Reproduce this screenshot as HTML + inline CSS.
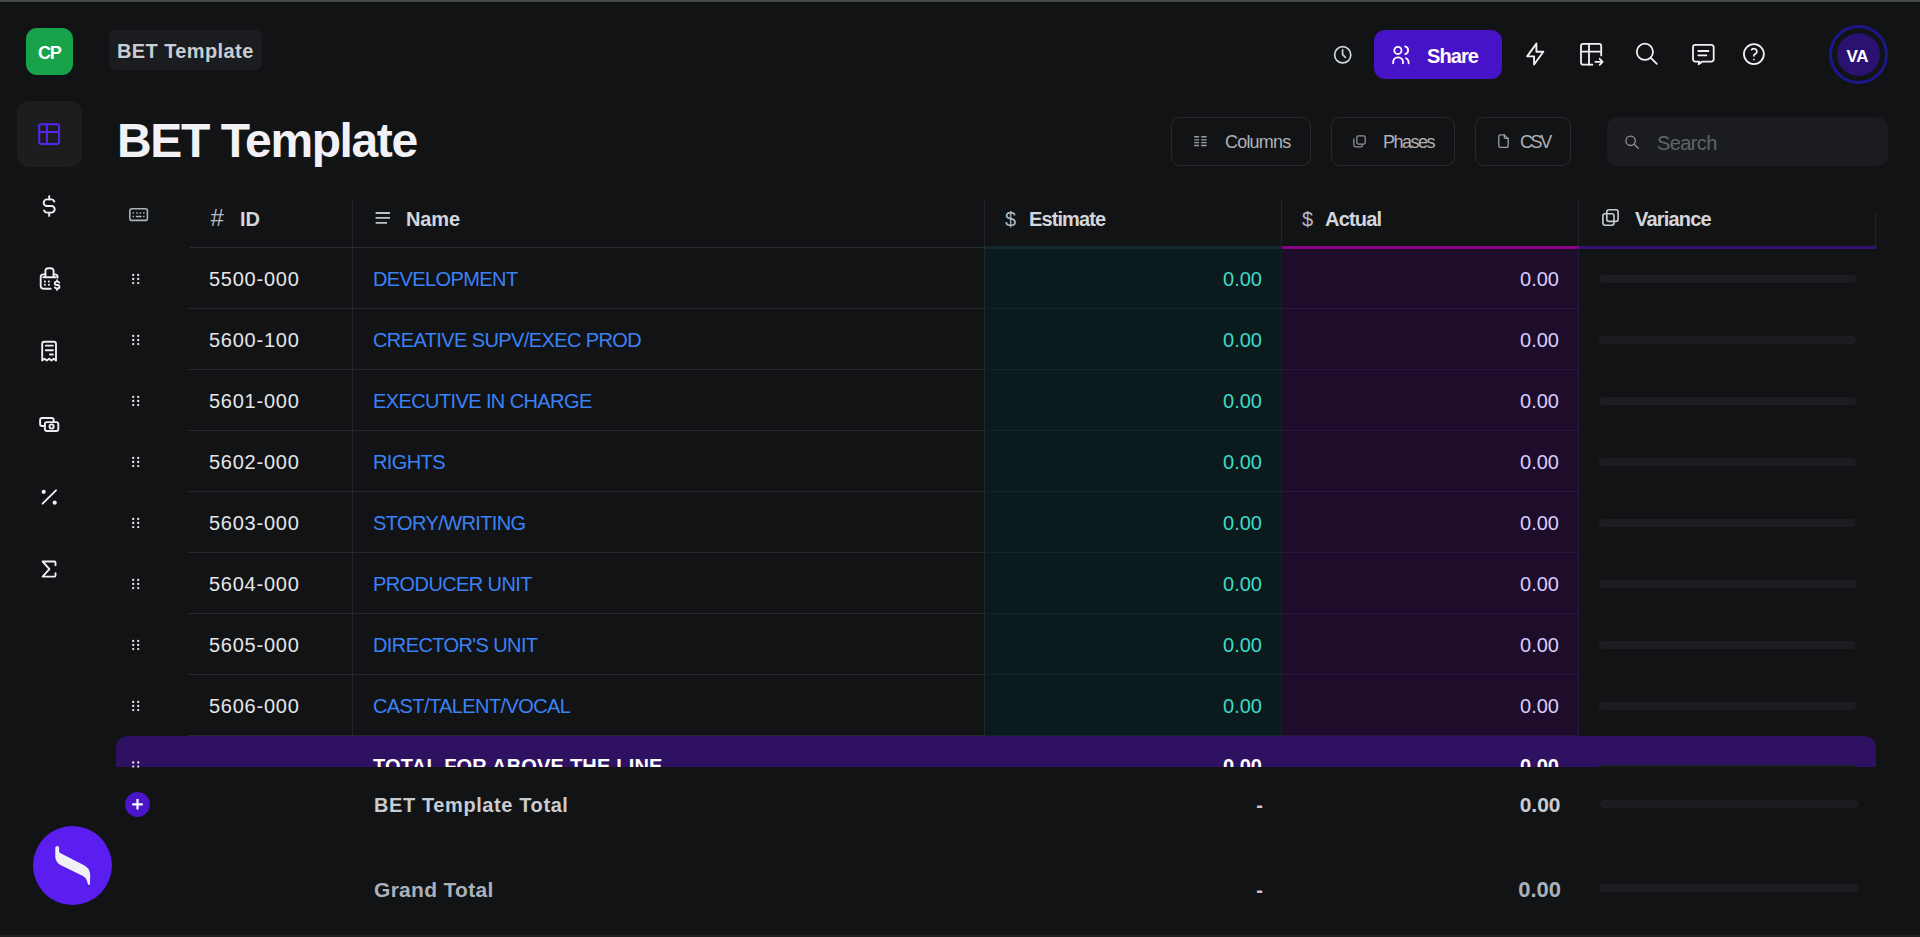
<!DOCTYPE html>
<html><head><meta charset="utf-8">
<style>
*{box-sizing:border-box;margin:0;padding:0}
html,body{width:1920px;height:937px;overflow:hidden;background:#121315;font-family:"Liberation Sans",sans-serif}
.a{position:absolute}
.t{position:absolute;line-height:1;white-space:nowrap}
svg.ov{position:absolute;left:0;top:0;width:1920px;height:937px;overflow:visible}
</style></head><body>
<div class="a" style="left:0;top:0;width:1920px;height:2px;background:#45494a"></div>
<div class="a" style="left:0;top:2px;width:1920px;height:1px;background:#0e0f11"></div>
<div class="a" style="left:26px;top:28px;width:47px;height:47px;border-radius:11px;background:#18a34a"></div>
<div class="t" style="left:38px;top:43.66px;font-size:18px;font-weight:700;color:#ffffff;letter-spacing:-1.2px;">CP</div>
<div class="a" style="left:109px;top:30px;width:153px;height:40px;border-radius:6px;background:#1b1c1f"></div>
<div class="t" style="left:117px;top:41.27px;font-size:20px;font-weight:700;color:#c9cdd4;letter-spacing:0.4px;">BET Template</div>
<div class="t" style="left:117px;top:117.17px;font-size:48px;font-weight:700;color:#f1f1f6;letter-spacing:-1.4px;">BET Template</div>
<div class="a" style="left:17px;top:101px;width:65px;height:66px;border-radius:12px;background:#1c1d1f"></div>
<div class="a" style="left:1374px;top:30px;width:128px;height:49px;border-radius:11px;background:#4713c7"></div>
<div class="t" style="left:1427px;top:46.27px;font-size:20px;font-weight:700;color:#ffffff;letter-spacing:-0.9px;">Share</div>
<div class="a" style="left:1829px;top:25px;width:59px;height:59px;border-radius:50%;border:3px solid #1c178c"></div>
<div class="a" style="left:1837px;top:33px;width:43px;height:43px;border-radius:50%;background:#2b1270"></div>
<div class="t" style="left:1846.5px;top:47.91px;font-size:17px;font-weight:700;color:#ffffff;letter-spacing:-0.4px;">VA</div>
<div class="a" style="left:1171px;top:117px;width:140px;height:49px;border-radius:9px;border:1px solid #26282b"></div>
<div class="t" style="left:1225px;top:133.46px;font-size:18px;font-weight:400;color:#aeb2b9;letter-spacing:-0.8px;">Columns</div>
<div class="a" style="left:1331px;top:117px;width:124px;height:49px;border-radius:9px;border:1px solid #26282b"></div>
<div class="t" style="left:1383px;top:133.46px;font-size:18px;font-weight:400;color:#aeb2b9;letter-spacing:-1.5px;">Phases</div>
<div class="a" style="left:1475px;top:117px;width:96px;height:49px;border-radius:9px;border:1px solid #26282b"></div>
<div class="t" style="left:1520px;top:133.46px;font-size:18px;font-weight:400;color:#aeb2b9;letter-spacing:-2.4px;">CSV</div>
<div class="a" style="left:1607px;top:117px;width:281px;height:49px;border-radius:10px;background:#1b1c1f"></div>
<div class="t" style="left:1657px;top:133.37px;font-size:20px;font-weight:400;color:#5f646b;letter-spacing:-0.6px;">Search</div>
<div class="t" style="left:210.5px;top:205.68px;font-size:24px;font-weight:400;color:#b4bac2;">#</div>
<div class="t" style="left:240px;top:208.57px;font-size:20px;font-weight:700;color:#d3d6dc;">ID</div>
<div class="t" style="left:406px;top:208.57px;font-size:20px;font-weight:700;color:#d3d6dc;letter-spacing:-0.1px;">Name</div>
<div class="t" style="left:1005px;top:208.57px;font-size:20px;font-weight:400;color:#b4bac2;">$</div>
<div class="t" style="left:1029px;top:208.57px;font-size:20px;font-weight:700;color:#d3d6dc;letter-spacing:-0.9px;">Estimate</div>
<div class="t" style="left:1302px;top:208.57px;font-size:20px;font-weight:400;color:#b4bac2;">$</div>
<div class="t" style="left:1325px;top:208.57px;font-size:20px;font-weight:700;color:#d3d6dc;letter-spacing:-0.8px;">Actual</div>
<div class="t" style="left:1635px;top:208.57px;font-size:20px;font-weight:700;color:#d3d6dc;letter-spacing:-0.8px;">Variance</div>
<div class="a" style="left:352px;top:199px;width:1px;height:48px;background:#232427"></div>
<div class="a" style="left:984px;top:199px;width:1px;height:48px;background:#232427"></div>
<div class="a" style="left:1281px;top:199px;width:1px;height:48px;background:#232427"></div>
<div class="a" style="left:1578px;top:199px;width:1px;height:48px;background:#232427"></div>
<div class="a" style="left:1875px;top:211px;width:1px;height:38px;background:#232427"></div>
<div class="a" style="left:190px;top:247px;width:795px;height:1px;background:#2a2c30"></div>
<div class="a" style="left:985px;top:246px;width:296px;height:490px;background:#0b1b1d"></div>
<div class="a" style="left:1282px;top:246px;width:296px;height:490px;background:#1d0d2a"></div>
<div class="a" style="left:985px;top:246px;width:296px;height:3px;background:#13292e"></div>
<div class="a" style="left:1282px;top:246px;width:297px;height:3px;background:#8c0088"></div>
<div class="a" style="left:1579px;top:246px;width:297px;height:3px;background:#341274"></div>
<div class="a" style="left:188px;top:308px;width:797px;height:1px;background:#26282b"></div>
<div class="a" style="left:985px;top:308px;width:296px;height:1px;background:#10262a"></div>
<div class="a" style="left:1282px;top:308px;width:296px;height:1px;background:#2a1640"></div>
<div class="a" style="left:352px;top:248px;width:1px;height:61px;background:#232427"></div>
<div class="a" style="left:984px;top:248px;width:1px;height:61px;background:#232427"></div>
<div class="a" style="left:1281px;top:248px;width:1px;height:61px;background:#10262a"></div>
<div class="a" style="left:1578px;top:248px;width:1px;height:61px;background:#1f1a40"></div>
<div class="t" style="left:209px;top:269.07px;font-size:20px;font-weight:400;color:#e4e6ea;letter-spacing:0.75px;">5500-000</div>
<div class="t" style="left:373px;top:269.07px;font-size:20px;font-weight:400;color:#3b82f6;letter-spacing:-0.6px;">DEVELOPMENT</div>
<div class="t" style="right:658px;top:269.07px;font-size:20px;font-weight:400;color:#3ddac6;">0.00</div>
<div class="t" style="right:361px;top:269.07px;font-size:20px;font-weight:400;color:#d9ccff;">0.00</div>
<div class="a" style="left:1599px;top:275px;width:257px;height:8px;border-radius:4px;background:#1c1d20"></div>
<div class="a" style="left:188px;top:369px;width:797px;height:1px;background:#26282b"></div>
<div class="a" style="left:985px;top:369px;width:296px;height:1px;background:#10262a"></div>
<div class="a" style="left:1282px;top:369px;width:296px;height:1px;background:#2a1640"></div>
<div class="a" style="left:352px;top:309px;width:1px;height:61px;background:#232427"></div>
<div class="a" style="left:984px;top:309px;width:1px;height:61px;background:#232427"></div>
<div class="a" style="left:1281px;top:309px;width:1px;height:61px;background:#10262a"></div>
<div class="a" style="left:1578px;top:309px;width:1px;height:61px;background:#1f1a40"></div>
<div class="t" style="left:209px;top:330.07px;font-size:20px;font-weight:400;color:#e4e6ea;letter-spacing:0.75px;">5600-100</div>
<div class="t" style="left:373px;top:330.07px;font-size:20px;font-weight:400;color:#3b82f6;letter-spacing:-0.6px;">CREATIVE SUPV/EXEC PROD</div>
<div class="t" style="right:658px;top:330.07px;font-size:20px;font-weight:400;color:#3ddac6;">0.00</div>
<div class="t" style="right:361px;top:330.07px;font-size:20px;font-weight:400;color:#d9ccff;">0.00</div>
<div class="a" style="left:1599px;top:336px;width:257px;height:8px;border-radius:4px;background:#1c1d20"></div>
<div class="a" style="left:188px;top:430px;width:797px;height:1px;background:#26282b"></div>
<div class="a" style="left:985px;top:430px;width:296px;height:1px;background:#10262a"></div>
<div class="a" style="left:1282px;top:430px;width:296px;height:1px;background:#2a1640"></div>
<div class="a" style="left:352px;top:370px;width:1px;height:61px;background:#232427"></div>
<div class="a" style="left:984px;top:370px;width:1px;height:61px;background:#232427"></div>
<div class="a" style="left:1281px;top:370px;width:1px;height:61px;background:#10262a"></div>
<div class="a" style="left:1578px;top:370px;width:1px;height:61px;background:#1f1a40"></div>
<div class="t" style="left:209px;top:391.07px;font-size:20px;font-weight:400;color:#e4e6ea;letter-spacing:0.75px;">5601-000</div>
<div class="t" style="left:373px;top:391.07px;font-size:20px;font-weight:400;color:#3b82f6;letter-spacing:-0.6px;">EXECUTIVE IN CHARGE</div>
<div class="t" style="right:658px;top:391.07px;font-size:20px;font-weight:400;color:#3ddac6;">0.00</div>
<div class="t" style="right:361px;top:391.07px;font-size:20px;font-weight:400;color:#d9ccff;">0.00</div>
<div class="a" style="left:1599px;top:397px;width:257px;height:8px;border-radius:4px;background:#1c1d20"></div>
<div class="a" style="left:188px;top:491px;width:797px;height:1px;background:#26282b"></div>
<div class="a" style="left:985px;top:491px;width:296px;height:1px;background:#10262a"></div>
<div class="a" style="left:1282px;top:491px;width:296px;height:1px;background:#2a1640"></div>
<div class="a" style="left:352px;top:431px;width:1px;height:61px;background:#232427"></div>
<div class="a" style="left:984px;top:431px;width:1px;height:61px;background:#232427"></div>
<div class="a" style="left:1281px;top:431px;width:1px;height:61px;background:#10262a"></div>
<div class="a" style="left:1578px;top:431px;width:1px;height:61px;background:#1f1a40"></div>
<div class="t" style="left:209px;top:452.07px;font-size:20px;font-weight:400;color:#e4e6ea;letter-spacing:0.75px;">5602-000</div>
<div class="t" style="left:373px;top:452.07px;font-size:20px;font-weight:400;color:#3b82f6;letter-spacing:-0.6px;">RIGHTS</div>
<div class="t" style="right:658px;top:452.07px;font-size:20px;font-weight:400;color:#3ddac6;">0.00</div>
<div class="t" style="right:361px;top:452.07px;font-size:20px;font-weight:400;color:#d9ccff;">0.00</div>
<div class="a" style="left:1599px;top:458px;width:257px;height:8px;border-radius:4px;background:#1c1d20"></div>
<div class="a" style="left:188px;top:552px;width:797px;height:1px;background:#26282b"></div>
<div class="a" style="left:985px;top:552px;width:296px;height:1px;background:#10262a"></div>
<div class="a" style="left:1282px;top:552px;width:296px;height:1px;background:#2a1640"></div>
<div class="a" style="left:352px;top:492px;width:1px;height:61px;background:#232427"></div>
<div class="a" style="left:984px;top:492px;width:1px;height:61px;background:#232427"></div>
<div class="a" style="left:1281px;top:492px;width:1px;height:61px;background:#10262a"></div>
<div class="a" style="left:1578px;top:492px;width:1px;height:61px;background:#1f1a40"></div>
<div class="t" style="left:209px;top:513.07px;font-size:20px;font-weight:400;color:#e4e6ea;letter-spacing:0.75px;">5603-000</div>
<div class="t" style="left:373px;top:513.07px;font-size:20px;font-weight:400;color:#3b82f6;letter-spacing:-0.6px;">STORY/WRITING</div>
<div class="t" style="right:658px;top:513.07px;font-size:20px;font-weight:400;color:#3ddac6;">0.00</div>
<div class="t" style="right:361px;top:513.07px;font-size:20px;font-weight:400;color:#d9ccff;">0.00</div>
<div class="a" style="left:1599px;top:519px;width:257px;height:8px;border-radius:4px;background:#1c1d20"></div>
<div class="a" style="left:188px;top:613px;width:797px;height:1px;background:#26282b"></div>
<div class="a" style="left:985px;top:613px;width:296px;height:1px;background:#10262a"></div>
<div class="a" style="left:1282px;top:613px;width:296px;height:1px;background:#2a1640"></div>
<div class="a" style="left:352px;top:553px;width:1px;height:61px;background:#232427"></div>
<div class="a" style="left:984px;top:553px;width:1px;height:61px;background:#232427"></div>
<div class="a" style="left:1281px;top:553px;width:1px;height:61px;background:#10262a"></div>
<div class="a" style="left:1578px;top:553px;width:1px;height:61px;background:#1f1a40"></div>
<div class="t" style="left:209px;top:574.07px;font-size:20px;font-weight:400;color:#e4e6ea;letter-spacing:0.75px;">5604-000</div>
<div class="t" style="left:373px;top:574.07px;font-size:20px;font-weight:400;color:#3b82f6;letter-spacing:-0.6px;">PRODUCER UNIT</div>
<div class="t" style="right:658px;top:574.07px;font-size:20px;font-weight:400;color:#3ddac6;">0.00</div>
<div class="t" style="right:361px;top:574.07px;font-size:20px;font-weight:400;color:#d9ccff;">0.00</div>
<div class="a" style="left:1599px;top:580px;width:257px;height:8px;border-radius:4px;background:#1c1d20"></div>
<div class="a" style="left:188px;top:674px;width:797px;height:1px;background:#26282b"></div>
<div class="a" style="left:985px;top:674px;width:296px;height:1px;background:#10262a"></div>
<div class="a" style="left:1282px;top:674px;width:296px;height:1px;background:#2a1640"></div>
<div class="a" style="left:352px;top:614px;width:1px;height:61px;background:#232427"></div>
<div class="a" style="left:984px;top:614px;width:1px;height:61px;background:#232427"></div>
<div class="a" style="left:1281px;top:614px;width:1px;height:61px;background:#10262a"></div>
<div class="a" style="left:1578px;top:614px;width:1px;height:61px;background:#1f1a40"></div>
<div class="t" style="left:209px;top:635.07px;font-size:20px;font-weight:400;color:#e4e6ea;letter-spacing:0.75px;">5605-000</div>
<div class="t" style="left:373px;top:635.07px;font-size:20px;font-weight:400;color:#3b82f6;letter-spacing:-0.6px;">DIRECTOR'S UNIT</div>
<div class="t" style="right:658px;top:635.07px;font-size:20px;font-weight:400;color:#3ddac6;">0.00</div>
<div class="t" style="right:361px;top:635.07px;font-size:20px;font-weight:400;color:#d9ccff;">0.00</div>
<div class="a" style="left:1599px;top:641px;width:257px;height:8px;border-radius:4px;background:#1c1d20"></div>
<div class="a" style="left:188px;top:735px;width:797px;height:1px;background:#26282b"></div>
<div class="a" style="left:985px;top:735px;width:296px;height:1px;background:#10262a"></div>
<div class="a" style="left:1282px;top:735px;width:296px;height:1px;background:#2a1640"></div>
<div class="a" style="left:352px;top:675px;width:1px;height:61px;background:#232427"></div>
<div class="a" style="left:984px;top:675px;width:1px;height:61px;background:#232427"></div>
<div class="a" style="left:1281px;top:675px;width:1px;height:61px;background:#10262a"></div>
<div class="a" style="left:1578px;top:675px;width:1px;height:61px;background:#1f1a40"></div>
<div class="t" style="left:209px;top:696.07px;font-size:20px;font-weight:400;color:#e4e6ea;letter-spacing:0.75px;">5606-000</div>
<div class="t" style="left:373px;top:696.07px;font-size:20px;font-weight:400;color:#3b82f6;letter-spacing:-0.6px;">CAST/TALENT/VOCAL</div>
<div class="t" style="right:658px;top:696.07px;font-size:20px;font-weight:400;color:#3ddac6;">0.00</div>
<div class="t" style="right:361px;top:696.07px;font-size:20px;font-weight:400;color:#d9ccff;">0.00</div>
<div class="a" style="left:1599px;top:702px;width:257px;height:8px;border-radius:4px;background:#1c1d20"></div>
<div class="a" style="left:116px;top:736px;width:1760px;height:31px;overflow:hidden"><div class="a" style="left:0;top:0;width:1760px;height:61px;border-radius:12px;background:#2f1162"></div><div class="t" style="left:257px;top:20.27px;font-size:20px;font-weight:700;color:#ffffff;letter-spacing:0.2px;">TOTAL FOR ABOVE THE LINE</div>
<div class="t" style="right:614px;top:20.27px;font-size:20px;font-weight:700;color:#ffffff;">0.00</div>
<div class="t" style="right:317px;top:20.27px;font-size:20px;font-weight:700;color:#ffffff;">0.00</div>
<div class="a" style="left:1483px;top:29px;width:257px;height:8px;border-radius:4px;background:#1c1d20"></div></div>
<div class="a" style="left:125px;top:792px;width:25px;height:25px;border-radius:50%;background:#4a14c8"></div>
<div class="t" style="left:374px;top:794.87px;font-size:20px;font-weight:700;color:#c9ccd1;letter-spacing:0.6px;">BET Template Total</div>
<div class="t" style="right:657px;top:794.87px;font-size:20px;font-weight:700;color:#c9ccd1;">-</div>
<div class="t" style="right:359.5px;top:794.42px;font-size:21px;font-weight:700;color:#c9ccd1;">0.00</div>
<div class="a" style="left:1600px;top:800px;width:258px;height:8px;border-radius:4px;background:#1c1d20"></div>
<div class="t" style="left:374px;top:879.02px;font-size:21px;font-weight:700;color:#a9b1bb;letter-spacing:0.3px;">Grand Total</div>
<div class="t" style="right:657px;top:879.87px;font-size:20px;font-weight:700;color:#c9ccd1;">-</div>
<div class="t" style="right:359px;top:879.18px;font-size:22px;font-weight:700;color:#a9b1bb;">0.00</div>
<div class="a" style="left:1600px;top:884px;width:258px;height:8px;border-radius:4px;background:#1c1d20"></div>
<div class="a" style="left:33px;top:826px;width:79px;height:79px;border-radius:50%;background:#5a1ff0"></div>
<div class="a" style="left:0;top:935px;width:1920px;height:2px;background:#202222"></div>
<svg class="ov" viewBox="0 0 1920 937" fill="none" stroke-linecap="round" stroke-linejoin="round">
<g transform="translate(35.9,120.9) scale(1.1)" stroke="#5626ee" stroke-width="1.85"><path d="M3 5a2 2 0 0 1 2 -2h14a2 2 0 0 1 2 2v14a2 2 0 0 1 -2 2h-14a2 2 0 0 1 -2 -2z"/><path d="M3 10h18"/><path d="M10 3v18"/></g>
<g transform="translate(36,192.8) scale(1.1)" stroke="#eceef2" stroke-width="1.75"><path d="M16.7 8a3 3 0 0 0 -2.7 -2h-4a3 3 0 0 0 0 6h4a3 3 0 0 1 0 6h-4a3 3 0 0 1 -2.7 -2"/><path d="M12 3v3m0 12v3"/></g>
<g stroke="#eceef2" stroke-width="1.9"><path d="M45.4 277V270.8a2.6 2.6 0 0 1 2.6 -2.6H51a2.6 2.6 0 0 1 2.6 2.6V277"/><path d="M50.6 288.7H43.3a2.6 2.6 0 0 1 -2.6 -2.6V277a2.6 2.6 0 0 1 2.6 -2.6H45.4M53.6 274.4H55a2.6 2.6 0 0 1 2.6 2.6V277.6"/><path d="M43.2 277.2H56"/><path d="M59.3 282.6a1.8 1.8 0 0 0 -1.6 -1h-1.2a1.7 1.7 0 0 0 0 3.4h1.2a1.7 1.7 0 0 1 0 3.4h-1.2a1.8 1.8 0 0 1 -1.6 -1M57.1 280.3v1.3M57.1 288.4v1.5"/></g><g fill="#eceef2"><circle cx="44.9" cy="281.6" r="1.05"/><circle cx="48.9" cy="281.6" r="1.05"/><circle cx="44.9" cy="284.8" r="1.05"/><circle cx="48.9" cy="284.8" r="1.05"/></g>
<g stroke="#eceef2" stroke-width="1.9"><path d="M42.2 360.5V344a2.2 2.2 0 0 1 2.2 -2.2H53.8a2.2 2.2 0 0 1 2.2 2.2V360.5l-2.3 -1.7 -2.3 1.7 -2.3 -1.7 -2.3 1.7 -2.3 -1.7 -2.3 1.7"/><path d="M45.8 345.6H52.9M45.8 350.2H52.9M50 354.5H52.9"/></g>
<g stroke="#eceef2" stroke-width="1.9"><rect x="44.9" y="422.1" width="13.4" height="8.9" rx="2"/><path d="M53.7 422V420a2 2 0 0 0 -2 -2H42.1a2 2 0 0 0 -2 2V424a2 2 0 0 0 2 2H44.5"/><circle cx="51.6" cy="426.5" r="2.1"/></g>
<g stroke="#eceef2" stroke-width="1.9"><path d="M42.6 503.7L56 490.3"/></g><g fill="#eceef2"><circle cx="43.7" cy="491.8" r="2.1"/><circle cx="54.7" cy="502.7" r="2.1"/></g>
<g stroke="#eceef2" stroke-width="1.9"><path d="M55.5 565.2V562.5a1 1 0 0 0 -1 -1H42.6L49.4 569.2L42.6 576.6H54.5a1 1 0 0 0 1 -1V573.2"/></g>
<g stroke="#cfd4da" stroke-width="1.7"><circle cx="1342.7" cy="54.8" r="8.1"/><path d="M1342.6 49.8V54.6L1345.4 57.3"/></g>
<g stroke="#ffffff" stroke-width="1.8"><circle cx="1397.9" cy="50.4" r="3.6"/><path d="M1393.2 63.3V62a4.7 4.7 0 0 1 4.7 -4.7h0.4a4.7 4.7 0 0 1 4.7 4.7V63.3"/><path d="M1405.2 46.4a4 4 0 0 1 0 7.7"/><path d="M1408.6 63.3V62.2a4.4 4.4 0 0 0 -2.6 -4"/></g>
<g transform="translate(1536.4,43.6) scale(1.16) translate(-13,-3)" stroke="#f0f1f4" stroke-width="1.6"><path d="M13 3l0 7l6 0l-8 11l0 -7l-6 0l8 -11"/></g>
<g stroke="#f0f1f4" stroke-width="1.8"><path d="M1592.4 64.7H1583.2a2.2 2.2 0 0 1 -2.2 -2.2V46a2.2 2.2 0 0 1 2.2 -2.2H1599a2.2 2.2 0 0 1 2.2 2.2V55.4"/><path d="M1581 51.7H1601.2M1589 43.8V64.7"/><path d="M1595.4 61.8H1602.6M1599.7 58.8l2.9 3l-2.9 3"/></g>
<g stroke="#f0f1f4" stroke-width="1.8"><circle cx="1644.9" cy="51.8" r="8.1"/><path d="M1650.8 57.8L1656.8 63.8"/></g>
<g stroke="#f0f1f4" stroke-width="1.8"><path d="M1699.4 61.6L1698.6 64.3L1702.6 61.6H1711.4a2.3 2.3 0 0 0 2.3 -2.3V47.2a2.3 2.3 0 0 0 -2.3 -2.3H1695.3a2.3 2.3 0 0 0 -2.3 2.3V59.3a2.3 2.3 0 0 0 2.3 2.3Z"/><path d="M1698.3 51H1708.4M1698.3 55.3H1706.4"/></g>
<g transform="translate(1753.9,54.1) scale(1.11) translate(-12,-12)" stroke="#f0f1f4" stroke-width="1.6"><circle cx="12" cy="12" r="9"/><path d="M12 16.9v.01"/><path d="M12 13.5a1.5 1.5 0 0 1 1 -1.5a2.6 2.6 0 1 0 -3 -4"/></g>
<g stroke="#9ca0a6" stroke-width="1.4" stroke-linecap="butt"><path d="M1194.2 136.8H1199M1194.2 139.9H1199M1194.2 142.6H1199M1194.2 145.5H1199M1201.2 136.8H1206.6M1201.2 139.9H1206.6M1201.2 142.6H1206.6M1201.2 145.5H1206.6"/></g>
<g stroke="#8c9096" stroke-width="1.3"><rect x="1356.8" y="135.8" width="8.4" height="8.4" rx="1.6"/><path d="M1353.8 139V145a1.8 1.8 0 0 0 1.8 1.8H1360.8a1.6 1.6 0 0 0 1.6 -1.6V144.6"/></g>
<g stroke="#9a9ea4" stroke-width="1.3"><path d="M1504.3 134.9H1500.4a1.6 1.6 0 0 0 -1.6 1.6V145.8a1.6 1.6 0 0 0 1.6 1.6H1506.6a1.6 1.6 0 0 0 1.6 -1.6V138.6Z"/><path d="M1504.3 134.9V137a1.4 1.4 0 0 0 1.4 1.4H1508.2"/></g>
<g stroke="#8e9298" stroke-width="1.3"><circle cx="1630.6" cy="140.8" r="4.7"/><path d="M1634 144.3L1638.3 148.3"/></g>
<g stroke="#aab3bf" stroke-width="1.6"><rect x="129.8" y="208.8" width="17.6" height="11.6" rx="2"/><path d="M136.5 216.6H141" stroke-width="1.5"/></g>
<g fill="#aab3bf"><rect x="132.6" y="212.2" width="1.4" height="1.5"/><rect x="136.2" y="212.2" width="1.4" height="1.5"/><rect x="139.6" y="212.2" width="1.4" height="1.5"/><rect x="143.1" y="212.2" width="1.4" height="1.5"/><rect x="132.6" y="215.8" width="1.4" height="1.5"/><rect x="143.1" y="215.8" width="1.4" height="1.5"/></g>
<g stroke="#bcc3cb" stroke-width="1.9" stroke-linecap="butt"><path d="M375.6 213H390M375.6 217.9H390M375.6 222.9H387"/></g>
<g stroke="#c8ccd2" stroke-width="1.6"><rect x="1602.9" y="213.7" width="11.1" height="11.6" rx="2.2"/><rect x="1606.8" y="209.8" width="11.3" height="11.6" rx="2.2"/></g>
<circle cx="133.2" cy="274.9" r="1.15" fill="#e8eaee"/>
<circle cx="133.2" cy="279" r="1.15" fill="#e8eaee"/>
<circle cx="133.2" cy="283.1" r="1.15" fill="#e8eaee"/>
<circle cx="138.2" cy="274.9" r="1.15" fill="#e8eaee"/>
<circle cx="138.2" cy="279" r="1.15" fill="#e8eaee"/>
<circle cx="138.2" cy="283.1" r="1.15" fill="#e8eaee"/>
<circle cx="133.2" cy="335.9" r="1.15" fill="#e8eaee"/>
<circle cx="133.2" cy="340" r="1.15" fill="#e8eaee"/>
<circle cx="133.2" cy="344.1" r="1.15" fill="#e8eaee"/>
<circle cx="138.2" cy="335.9" r="1.15" fill="#e8eaee"/>
<circle cx="138.2" cy="340" r="1.15" fill="#e8eaee"/>
<circle cx="138.2" cy="344.1" r="1.15" fill="#e8eaee"/>
<circle cx="133.2" cy="396.9" r="1.15" fill="#e8eaee"/>
<circle cx="133.2" cy="401" r="1.15" fill="#e8eaee"/>
<circle cx="133.2" cy="405.1" r="1.15" fill="#e8eaee"/>
<circle cx="138.2" cy="396.9" r="1.15" fill="#e8eaee"/>
<circle cx="138.2" cy="401" r="1.15" fill="#e8eaee"/>
<circle cx="138.2" cy="405.1" r="1.15" fill="#e8eaee"/>
<circle cx="133.2" cy="457.9" r="1.15" fill="#e8eaee"/>
<circle cx="133.2" cy="462" r="1.15" fill="#e8eaee"/>
<circle cx="133.2" cy="466.1" r="1.15" fill="#e8eaee"/>
<circle cx="138.2" cy="457.9" r="1.15" fill="#e8eaee"/>
<circle cx="138.2" cy="462" r="1.15" fill="#e8eaee"/>
<circle cx="138.2" cy="466.1" r="1.15" fill="#e8eaee"/>
<circle cx="133.2" cy="518.9" r="1.15" fill="#e8eaee"/>
<circle cx="133.2" cy="523" r="1.15" fill="#e8eaee"/>
<circle cx="133.2" cy="527.1" r="1.15" fill="#e8eaee"/>
<circle cx="138.2" cy="518.9" r="1.15" fill="#e8eaee"/>
<circle cx="138.2" cy="523" r="1.15" fill="#e8eaee"/>
<circle cx="138.2" cy="527.1" r="1.15" fill="#e8eaee"/>
<circle cx="133.2" cy="579.9" r="1.15" fill="#e8eaee"/>
<circle cx="133.2" cy="584" r="1.15" fill="#e8eaee"/>
<circle cx="133.2" cy="588.1" r="1.15" fill="#e8eaee"/>
<circle cx="138.2" cy="579.9" r="1.15" fill="#e8eaee"/>
<circle cx="138.2" cy="584" r="1.15" fill="#e8eaee"/>
<circle cx="138.2" cy="588.1" r="1.15" fill="#e8eaee"/>
<circle cx="133.2" cy="640.9" r="1.15" fill="#e8eaee"/>
<circle cx="133.2" cy="645" r="1.15" fill="#e8eaee"/>
<circle cx="133.2" cy="649.1" r="1.15" fill="#e8eaee"/>
<circle cx="138.2" cy="640.9" r="1.15" fill="#e8eaee"/>
<circle cx="138.2" cy="645" r="1.15" fill="#e8eaee"/>
<circle cx="138.2" cy="649.1" r="1.15" fill="#e8eaee"/>
<circle cx="133.2" cy="701.9" r="1.15" fill="#e8eaee"/>
<circle cx="133.2" cy="706" r="1.15" fill="#e8eaee"/>
<circle cx="133.2" cy="710.1" r="1.15" fill="#e8eaee"/>
<circle cx="138.2" cy="701.9" r="1.15" fill="#e8eaee"/>
<circle cx="138.2" cy="706" r="1.15" fill="#e8eaee"/>
<circle cx="138.2" cy="710.1" r="1.15" fill="#e8eaee"/>
<circle cx="133.2" cy="762.5" r="1.15" fill="#e8eaee"/>
<circle cx="133.2" cy="766.6" r="1.15" fill="#e8eaee"/>
<circle cx="138.2" cy="762.5" r="1.15" fill="#e8eaee"/>
<circle cx="138.2" cy="766.6" r="1.15" fill="#e8eaee"/>
<g stroke="#ffffff" stroke-width="2.2" stroke-linecap="butt"><path d="M137.5 799V809.5M132.3 804.3H142.8"/></g>
<g transform="translate(33,826)" fill="#f2f0f7"><path d="M24.3 20C25.5 20 26.1 21 26.1 22L26.1 25C26.1 26.5 27 27 28.6 27.8L51.5 39.5C55.5 41.8 57.2 45 57.2 49L57 57.5C57 58.5 56.5 59 56 59C55 59 54.5 56 53.4 53.5C52.5 51.8 51.5 50.8 49.9 50L29 39.8C25 37.8 22.3 35 22.3 30L22.3 22.5C22.3 21 23 20 24.3 20Z"/></g>
</svg>
</body></html>
